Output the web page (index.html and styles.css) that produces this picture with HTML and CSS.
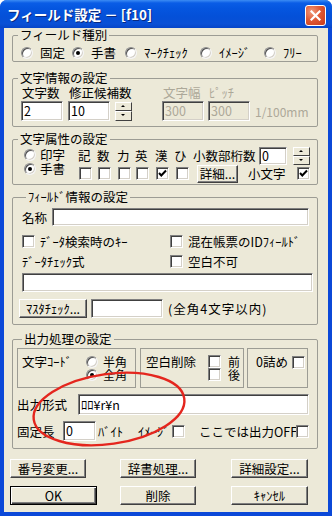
FILE: index.html
```html
<!DOCTYPE html>
<html lang="ja">
<head>
    <meta charset="UTF-8">
    <meta name="viewport" content="width=device-width, initial-scale=1.0">
    <title>フィールド設定</title>
    <link rel="stylesheet" href="styles.css">
</head>
<body>
<div class="window">
    <!-- タイトルバー -->
    <div class="titlebar">
        <span class="title">フィールド設定 － [f10]</span>
        <span class="close">
            <svg width="11" height="11" viewBox="0 0 11 11"><path d="M1.5 1.5 L9.5 9.5 M9.5 1.5 L1.5 9.5" stroke="#fff" stroke-width="2.2" stroke-linecap="square"/></svg>
        </span>
    </div>

    <div class="client">
        <!-- フィールド種別 -->
        <fieldset class="group g1">
            <legend>フィールド種別</legend>
            <div class="kind-row">
                <span class="opt"><span class="radio"></span>固定</span>
                <span class="opt"><span class="radio on"></span>手書</span>
                <span class="opt"><span class="radio"></span>ﾏｰｸﾁｪｯｸ</span>
                <span class="opt"><span class="radio"></span>ｲﾒｰｼﾞ</span>
                <span class="opt"><span class="radio"></span>ﾌﾘｰ</span>
            </div>
        </fieldset>

        <!-- 文字情報 -->
        <fieldset class="group g2">
            <legend>文字情報の設定</legend>
            <div class="info-grid">
                <span class="lbl">文字数</span>
                <span class="lbl">修正候補数</span>
                <span></span>
                <span class="lbl dis">文字幅</span>
                <span class="lbl dis">ﾋﾟｯﾁ</span>
                <span></span>
                <span class="edit w42">2</span>
                <span class="edit w42">10</span>
                <span class="spin"><span class="up"></span><span class="down"></span></span>
                <span class="edit w42 disabled">300</span>
                <span class="edit w42 disabled">300</span>
                <span class="unit">1/100mm</span>
            </div>
        </fieldset>

        <!-- 文字属性 -->
        <fieldset class="group g3">
            <legend>文字属性の設定</legend>
            <div class="attr-row r1">
                <span class="opt c-mode"><span class="radio"></span>印字</span>
                <span>記</span>
                <span>数</span>
                <span>力</span>
                <span>英</span>
                <span>漢</span>
                <span>ひ</span>
                <span class="attr-tail">
                    <span class="dec-lbl">小数部桁数</span>
                    <span class="edit dec">0</span>
                    <span class="spin small"><span class="up"></span><span class="down"></span></span>
                </span>
            </div>
            <div class="attr-row r2">
                <span class="opt c-mode"><span class="radio on"></span>手書</span>
                <span><span class="check"></span></span>
                <span><span class="check"></span></span>
                <span><span class="check"></span></span>
                <span><span class="check"></span></span>
                <span><span class="check on"><svg width="11" height="11" viewBox="0 0 11 11"><polyline points="2,5 4.3,7.5 9,2.5" fill="none" stroke="#000" stroke-width="2"/></svg></span></span>
                <span><span class="check hira"></span></span>
                <span class="attr-tail">
                    <span class="btn detail">詳細...</span>
                    <span class="lower">小文字</span>
                    <span class="check on"><svg width="11" height="11" viewBox="0 0 11 11"><polyline points="2,5 4.3,7.5 9,2.5" fill="none" stroke="#000" stroke-width="2"/></svg></span>
                </span>
            </div>
        </fieldset>

        <!-- フィールド情報 -->
        <fieldset class="group g4">
            <legend>ﾌｨｰﾙﾄﾞ情報の設定</legend>
            <div class="name-row">
                <span class="lbl-name">名称</span>
                <span class="edit name"></span>
            </div>
            <div class="two-col first">
                <span class="chk c-left"><span class="check"></span>ﾃﾞｰﾀ検索時のｷｰ</span>
                <span class="chk"><span class="check"></span>混在帳票のIDﾌｨｰﾙﾄﾞ</span>
            </div>
            <div class="two-col second">
                <span class="c-left">ﾃﾞｰﾀﾁｪｯｸ式</span>
                <span class="chk"><span class="check"></span>空白不可</span>
            </div>
            <div class="wide-row">
                <span class="edit wide"></span>
            </div>
            <div class="mas-row">
                <span class="btn mas">ﾏｽﾀﾁｪｯｸ...</span>
                <span class="edit mas-in"></span>
                <span class="note">(全角4文字以内)</span>
            </div>
        </fieldset>

        <!-- 出力処理 -->
        <fieldset class="group g5">
            <legend>出力処理の設定</legend>
            <div class="boxes">
                <div class="box b-code">
                    <span class="box-lbl">文字ｺｰﾄﾞ</span>
                    <div class="stack">
                        <span class="opt"><span class="radio"></span>半角</span>
                        <span class="opt"><span class="radio on"></span>全角</span>
                    </div>
                </div>
                <div class="box b-trim">
                    <span class="box-lbl">空白削除</span>
                    <div class="stack">
                        <span class="chk"><span class="check"></span>前</span>
                        <span class="chk"><span class="check"></span>後</span>
                    </div>
                </div>
                <div class="box b-zero">
                    <span class="box-lbl">0詰め</span>
                    <span class="check"></span>
                </div>
            </div>
            <div class="fmt-row">
                <span class="lbl-fmt">出力形式</span>
                <span class="edit fmt">ﾛﾛ¥r¥n</span>
            </div>
            <div class="fix-row">
                <span class="lbl-fix">固定長</span>
                <span class="edit fix">0</span>
                <span class="byte">ﾊﾞｲﾄ</span>
                <span class="img">ｲﾒｰｼﾞ</span>
                <span class="check"></span>
                <span class="off">ここでは出力OFF</span>
                <span class="check"></span>
            </div>
        </fieldset>

        <!-- ボタン -->
        <div class="btn-rows">
            <div class="btn-row">
                <span class="btn b1">番号変更...</span>
                <span class="btn b2">辞書処理...</span>
                <span class="btn b3">詳細設定...</span>
            </div>
            <div class="btn-row">
                <span class="btn b1 ok default">OK</span>
                <span class="btn b2 del">削除</span>
                <span class="btn b3">ｷｬﾝｾﾙ</span>
            </div>
        </div>
    </div>

    <!-- 赤丸 -->
    <svg class="mark" width="332" height="516" viewBox="0 0 332 516">
        <ellipse cx="109" cy="409" rx="76" ry="35" transform="rotate(-8 109 409)" fill="none" stroke="#E4261E" stroke-width="2.4"/>
    </svg>
</div>
</body>
</html>
```

FILE: styles.css
```css
/* 基本 */
body {
    margin: 0;
    background: #ffffff;
    font-family: "Noto Sans CJK JP", "Noto Sans", sans-serif;
    font-size: 12.5px;
    color: #000000;
}
.window {
    position: relative;
    width: 332px;
    height: 516px;
    display: flex;
    flex-direction: column;
    background: #0B48D8;
    border-radius: 7px 7px 0 0;
    overflow: hidden;
}
.titlebar {
    height: 28px;
    display: flex;
    align-items: center;
    justify-content: space-between;
    padding: 0 6px 0 7px;
    background: linear-gradient(#3C8CF4 0, #0A5DE6 3px, #0556E0 8px, #0450D8 60%, #0A50D6 85%, #0645C8 100%);
    color: #ffffff;
    font-size: 13.5px;
    font-weight: bold;
    text-shadow: 1px 1px 0 #0A2A80;
}
.close {
    width: 21px;
    height: 21px;
    box-sizing: border-box;
    border: 1px solid #ffffff;
    border-radius: 3px;
    background: radial-gradient(circle at 30% 30%, #F09A7C 0, #E05A36 45%, #C83A18 100%);
    display: flex;
    align-items: center;
    justify-content: center;
    margin-top: 2px;
}
.client {
    flex: 1;
    margin: 0 4px 4px;
    background: #ECE9D8;
}

/* グループ枠 */
.group {
    margin: 0 0 0 8px;
    width: 306px;
    min-width: 0;
    box-sizing: border-box;
    border: 1px solid #9C9C94;
    border-radius: 2px;
    padding: 0;
}
.group legend {
    margin-left: 5px;
    padding: 0 2px;
    height: 14px;
    line-height: 14px;
    white-space: nowrap;
}

/* 共通部品 */
.opt, .chk {
    display: flex;
    align-items: center;
    white-space: nowrap;
}
.radio {
    position: relative;
    width: 12px;
    height: 12px;
    box-sizing: border-box;
    border-radius: 50%;
    background: #ffffff;
    border: 1px solid;
    border-color: #8C8C8C #F4F4F4 #F4F4F4 #8C8C8C;
    box-shadow: inset 1px 1px 0 #505050, inset -1px -1px 0 #D4D0C8;
    margin-right: 7px;
    flex: none;
}
.radio.on::after {
    content: "";
    position: absolute;
    left: 3px;
    top: 3px;
    width: 4px;
    height: 4px;
    border-radius: 50%;
    background: #000000;
}
.check {
    width: 13px;
    height: 13px;
    box-sizing: border-box;
    background: #ffffff;
    border: 1px solid;
    border-color: #808080 #ffffff #ffffff #808080;
    box-shadow: inset 1px 1px 0 #404040, inset -1px -1px 0 #D4D0C8;
    display: flex;
    align-items: center;
    justify-content: center;
    flex: none;
}
.chk .check {
    margin-right: 5px;
}
.edit {
    display: block;
    box-sizing: border-box;
    height: 20px;
    line-height: 18px;
    padding: 0 2px;
    background: #ffffff;
    border: 1px solid;
    border-color: #808080 #ffffff #ffffff #808080;
    box-shadow: inset 1px 1px 0 #404040, inset -1px -1px 0 #D4D0C8;
    white-space: nowrap;
    overflow: hidden;
}
.edit.disabled {
    background: #ECE9D8;
    color: #ACA899;
}
.btn {
    box-sizing: border-box;
    height: 19px;
    display: flex;
    align-items: center;
    justify-content: center;
    background: #ECE9D8;
    border: 1px solid;
    border-color: #ffffff #404040 #404040 #ffffff;
    box-shadow: inset -1px -1px 0 #808080;
    white-space: nowrap;
}
.btn.default {
    border: 1px solid #000000;
    box-shadow: inset 1px 1px 0 #ffffff, inset -1px -1px 0 #404040, inset -2px -2px 0 #808080;
}
.spin {
    width: 17px;
    height: 19px;
    display: flex;
    flex-direction: column;
}
.spin.small {
    height: 18px;
}
.spin span {
    flex: 1;
    position: relative;
    box-sizing: border-box;
    border: 1px solid;
    border-color: #ffffff #404040 #404040 #ffffff;
    background: #ECE9D8;
}
.spin span::after {
    content: "";
    position: absolute;
    left: 5px;
    top: 2px;
    border-left: 2px solid transparent;
    border-right: 2px solid transparent;
}
.spin .up::after {
    border-bottom: 2px solid #000000;
}
.spin .down::after {
    border-top: 2px solid #000000;
}
.dis {
    color: #ACA899;
}

/* フィールド種別 */
.g1 {
    padding-bottom: 2px;
}
.kind-row {
    display: grid;
    grid-template-columns: 51px 53px 75px 64px auto;
    height: 16px;
    margin-top: 1px;
    padding-left: 8px;
    align-items: center;
}

/* 文字情報 */
.g2 {
    margin-top: 9px;
    padding-bottom: 5px;
}
.info-grid {
    display: grid;
    grid-template-columns: 47px 47px 47px 46px 47px auto;
    grid-template-rows: 14px 20px;
    row-gap: 2px;
    padding-left: 8px;
    align-items: center;
    white-space: nowrap;
}
.info-grid .lbl {
    padding-left: 1px;
    line-height: 13px;
}
.w42 {
    width: 42px;
}
.unit {
    font-size: 12px;
    color: #ACA899;
}

/* 文字属性 */
.g3 {
    margin-top: 5px;
    padding-bottom: 3px;
}
.attr-row {
    display: grid;
    grid-template-columns: 57px 19px 20px 18px 20px 19px 19px auto;
    padding-left: 8px;
    align-items: center;
    white-space: nowrap;
}
.r1 {
    height: 18px;
}
.r2 {
    height: 17px;
}
.c-mode {
    padding-left: 3px;
    height: 13px;
    line-height: 13px;
    align-self: start;
}
.r1 .c-mode {
    margin-top: 2px;
}
.r2 .c-mode {
    margin-top: -2px;
}
.c-mode .radio {
    margin-right: 4px;
}
.r2 .check {
    margin-left: 1px;
}
.r2 .check.hira {
    margin-left: 2px;
}
.attr-tail {
    display: flex;
    align-items: center;
}
.dec-lbl {
    width: 66px;
}
.edit.dec {
    width: 28px;
    height: 18px;
    line-height: 16px;
}
.attr-tail .spin {
    margin-left: 6px;
}
.btn.detail {
    width: 41px;
    height: 18px;
    margin-left: 4px;
}
.lower {
    width: 49px;
    margin-left: 10px;
}
.attr-tail .check {
    margin-left: 0;
}

/* フィールド情報 */
.g4 {
    margin-top: 5px;
    padding: 0 0 6px 8px;
}
.name-row {
    display: flex;
    align-items: center;
    height: 18px;
    margin-top: 4px;
}
.lbl-name {
    width: 31px;
    padding-left: 1px;
    box-sizing: border-box;
}
.edit.name {
    width: 257px;
    height: 18px;
}
.two-col {
    display: flex;
    align-items: center;
    height: 16px;
}
.two-col.first {
    margin-top: 7px;
}
.two-col.second {
    margin-top: 4px;
}
.c-left {
    width: 149px;
    padding-left: 1px;
    box-sizing: border-box;
}
.wide-row {
    margin-top: 4px;
}
.edit.wide {
    width: 291px;
    height: 19px;
    margin-left: 1px;
}
.mas-row {
    display: flex;
    align-items: center;
    height: 19px;
    margin-top: 7px;
}
.btn.mas {
    width: 68px;
    margin-left: -2px;
}
.edit.mas-in {
    width: 72px;
    height: 19px;
    margin-left: 4px;
}
.note {
    margin-left: 5px;
    letter-spacing: 1px;
}

/* 出力処理 */
.g5 {
    margin-top: 7px;
    padding: 0 0 7px 4px;
}
.boxes {
    display: flex;
    margin-top: 2px;
}
.box {
    box-sizing: border-box;
    height: 40px;
    border: 1px solid #9C9C94;
    display: flex;
    align-items: flex-start;
    padding-top: 6px;
}
.box-lbl {
    line-height: 14px;
    white-space: nowrap;
}
.b-code {
    width: 119px;
    padding-left: 4px;
}
.b-code .box-lbl {
    width: 64px;
}
.b-trim {
    width: 104px;
    margin-left: 4px;
    padding-left: 5px;
}
.b-trim .box-lbl {
    width: 62px;
}
.b-zero {
    width: 61px;
    margin-left: 3px;
    padding-left: 8px;
}
.b-zero .box-lbl {
    width: 36px;
}
.b-zero .check {
    margin-top: 1px;
}
.stack {
    display: flex;
    flex-direction: column;
}
.stack > span {
    height: 13px;
    line-height: 13px;
    font-size: 12px;
}
.stack .radio {
    margin-right: 5px;
}
.stack .check {
    margin-right: 7px;
}
.fmt-row {
    display: flex;
    align-items: center;
    height: 21px;
    margin-top: 6px;
}
.lbl-fmt {
    width: 61px;
}
.edit.fmt {
    width: 231px;
    height: 21px;
    line-height: 19px;
}
.fix-row {
    display: flex;
    align-items: center;
    height: 20px;
    margin-top: 6px;
    white-space: nowrap;
}
.lbl-fix {
    width: 46px;
}
.edit.fix {
    width: 33px;
}
.byte {
    width: 40px;
    margin-left: 2px;
}
.img {
    width: 34px;
}
.off {
    width: 97px;
    margin-left: 14px;
}

/* ボタン */
.btn-rows {
    margin-top: 10px;
    padding-left: 6px;
}
.btn-row {
    display: flex;
}
.btn-row + .btn-row {
    margin-top: 8px;
}
.b1 {
    width: 76px;
}
.b2 {
    width: 76px;
    margin-left: 34px;
}
.b3 {
    width: 77px;
    margin-left: 35px;
}
.btn.ok {
    width: 87px;
}
.btn.del {
    margin-left: 23px;
}

/* 赤丸（上に重ねる） */
.mark {
    position: absolute;
    left: 0;
    top: 0;
    pointer-events: none;
}
```
